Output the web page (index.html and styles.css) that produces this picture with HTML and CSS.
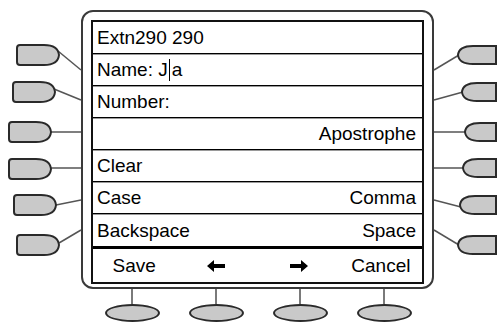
FILE: index.html
```html
<!DOCTYPE html>
<html lang="en">
<head>
  <meta charset="UTF-8" />
  <title>Phone Display - Name Edit</title>
  <link rel="stylesheet" href="styles.css">
</head>
<body>
  <div class="stage">
    <!-- side keys and their leader lines -->
    <svg class="side-keys" width="497" height="322" viewBox="0 0 497 322">
      <g class="leader">
        <line x1="58" y1="51" x2="81" y2="70" />
        <line x1="54" y1="89" x2="81" y2="100" />
        <line x1="51" y1="132" x2="81" y2="132" />
        <line x1="51" y1="168" x2="81" y2="168" />
        <line x1="56" y1="205" x2="81" y2="200" />
        <line x1="59" y1="243" x2="81" y2="230" />

        <line x1="459" y1="55" x2="434" y2="70" />
        <line x1="463" y1="92" x2="434" y2="100" />
        <line x1="466" y1="132" x2="434" y2="132" />
        <line x1="464" y1="168" x2="434" y2="168" />
        <line x1="461" y1="207" x2="434" y2="200" />
        <line x1="459" y1="245" x2="434" y2="230" />
      </g>
      <g class="key">
        <path d="M20 45 H44 Q58 45 59 55 Q58 65 44 65 H20 Q17 65 17 62 V48 Q17 45 20 45 Z" />
        <path d="M16 82 H40 Q54 82 55 92 Q54 102 40 102 H16 Q13 102 13 99 V85 Q13 82 16 82 Z" />
        <path d="M12 122 H36 Q50 122 51 132 Q50 142 36 142 H12 Q9 142 9 139 V125 Q9 122 12 122 Z" />
        <path d="M12 159 H36 Q50 159 51 169 Q50 179 36 179 H12 Q9 179 9 176 V162 Q9 159 12 159 Z" />
        <path d="M17 195 H41 Q55 195 56 205 Q55 215 41 215 H17 Q14 215 14 212 V198 Q14 195 17 195 Z" />
        <path d="M20 235 H44 Q58 235 59 245 Q58 255 44 255 H20 Q17 255 17 252 V238 Q17 235 20 235 Z" />

        <path d="M496 46 H473 Q459 46 458 55 Q459 64 473 64 H496 Z" />
        <path d="M496 83 H477 Q463 83 462 92 Q463 101 477 101 H496 Z" />
        <path d="M496 123 H480 Q466 123 465 132 Q466 141 480 141 H496 Z" />
        <path d="M496 159 H478 Q464 159 463 168 Q464 177 478 177 H496 Z" />
        <path d="M496 196 H475 Q461 196 460 205 Q461 214 475 214 H496 Z" />
        <path d="M496 236 H473 Q459 236 458 245 Q459 254 473 254 H496 Z" />
      </g>
    </svg>

    <div class="device">
      <div class="screen">
        <div class="row">Extn290 290</div>
        <div class="row">Name: J<span class="cursor"></span>a</div>
        <div class="row">Number:</div>
        <div class="row row-right">Apostrophe</div>
        <div class="row">Clear</div>
        <div class="row row-split"><span>Case</span><span>Comma</span></div>
        <div class="row row-split row-last"><span>Backspace</span><span>Space</span></div>
        <div class="softkeys">
          <span>Save</span>
          <svg class="arrow" width="18" height="12" viewBox="0 0 18 12">
            <path d="M0 6 L7 0 V4 H18 V8 H7 V12 Z" />
          </svg>
          <svg class="arrow" width="18" height="12" viewBox="0 0 18 12">
            <path d="M18 6 L11 0 V4 H0 V8 H11 V12 Z" />
          </svg>
          <span>Cancel</span>
        </div>
      </div>
    </div>

    <div class="bottom-keys">
      <div class="bkey"><i class="stem"></i><i class="oval"></i></div>
      <div class="bkey"><i class="stem"></i><i class="oval"></i></div>
      <div class="bkey"><i class="stem"></i><i class="oval"></i></div>
      <div class="bkey"><i class="stem"></i><i class="oval"></i></div>
    </div>
  </div>
</body>
</html>
```

FILE: styles.css
```css
* {
  box-sizing: border-box;
}

body {
  margin: 0;
  background: #fff;
  font-family: "Liberation Sans", Arial, sans-serif;
  color: #000;
}

.stage {
  position: relative;
  width: 497px;
  height: 322px;
  overflow: hidden;
}

/* overlay with the line keys on both sides */
.side-keys {
  position: absolute;
  top: 0;
  left: 0;
  pointer-events: none;
}

.side-keys .leader line {
  stroke: #555;
  stroke-width: 1.5;
}

.side-keys .key path {
  fill: #c9c9c9;
  stroke: #2a2a2a;
  stroke-width: 2;
}

/* outer bezel */
.device {
  margin: 10px 0 0 81px;
  width: 353px;
  height: 279px;
  border: 2px solid #3a3a3a;
  border-radius: 12px;
  padding: 8px 8px 3px;
}

/* display area */
.screen {
  height: 100%;
  border: 2px solid #111;
  display: flex;
  flex-direction: column;
  font-size: 19px;
  line-height: 1;
}

.row {
  height: 32px;
  flex: none;
  display: flex;
  align-items: center;
  padding: 0 6px 0 4px;
  border-bottom: 1px solid #000;
  box-shadow: 0 1px 0 #9a9a9a;
  white-space: nowrap;
}

.row-right {
  justify-content: flex-end;
}

.row-split {
  justify-content: space-between;
}

.row-last {
  border-bottom: 0;
  box-shadow: none;
}

.cursor {
  display: inline-block;
  width: 1px;
  height: 22px;
  margin: 0 2px 0 1px;
  background: #000;
}

/* soft key labels */
.softkeys {
  flex: 1;
  display: grid;
  grid-template-columns: repeat(4, 1fr);
  align-items: center;
  justify-items: center;
  border-top: 3px solid #000;
}

.softkeys .arrow {
  fill: #000;
}

/* the four keys under the display */
.bottom-keys {
  margin-left: 90px;
  width: 336px;
  display: grid;
  grid-template-columns: repeat(4, 1fr);
}

.bkey {
  display: flex;
  flex-direction: column;
  align-items: center;
}

.stem {
  width: 2px;
  height: 15px;
  background: #7a7a7a;
}

.oval {
  width: 55px;
  height: 18px;
  border: 2px solid #2a2a2a;
  border-radius: 50%;
  background: #c9c9c9;
}
```
